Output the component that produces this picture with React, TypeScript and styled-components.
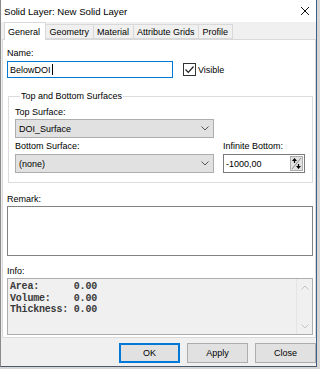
import React from 'react';
import styled, { createGlobalStyle } from 'styled-components';

const GlobalStyle = createGlobalStyle`
  html, body {
    margin: 0;
    padding: 0;
  }
  body {
    width: 320px;
    height: 369px;
    overflow: hidden;
    background: #d6d6d6;
    font-family: 'Liberation Sans', Arial, sans-serif;
  }
`;

const Window = styled.div`
  width: 315px;
  height: 366px;
  background: #f0f0f0;
  border-left: 1px solid #8a8a8a;
  border-right: 1px solid #3f5f86;
  border-bottom: 1px solid #4b5a6b;
  display: flex;
  flex-direction: column;
  color: #000;
  font-size: 9px;
`;

const TitleBar = styled.div`
  height: 22px;
  background: #fff;
  display: flex;
  align-items: center;
  justify-content: space-between;
  padding: 0 6px 0 3px;
  font-size: 9.6px;
`;

const TabStrip = styled.div`
  height: 17px;
  display: flex;
  align-items: flex-end;
  padding-left: 4px;
`;

const Tab = styled.div<{ active?: boolean }>`
  height: ${({ active }) => (active ? '18px' : '15px')};
  margin-bottom: ${({ active }) => (active ? '-1px' : '0')};
  padding: ${({ active }) => (active ? '0 5px 0 3px' : '0 3.5px')};
  display: flex;
  align-items: center;
  box-sizing: border-box;
  border: 1px solid #d9d9d9;
  border-bottom: ${({ active }) => (active ? 'none' : '1px solid #d9d9d9')};
  margin-left: -1px;
  background: ${({ active }) => (active ? '#fff' : '#f0f0f0')};
  position: relative;
  z-index: ${({ active }) => (active ? 1 : 0)};
`;

const TabPage = styled.div`
  height: 299px;
  margin-left: 1px;
  background: #fff;
  border: 1px solid #d9d9d9;
  box-sizing: border-box;
  padding: 7px 3px 0 4px;
  display: flex;
  flex-direction: column;
`;

const Label = styled.div<{ gap?: number; top?: number }>`
  height: 12px;
  line-height: 12px;
  margin-top: ${({ top }) => top ?? 0}px;
  margin-bottom: ${({ gap }) => gap ?? 2}px;
`;

const Row = styled.div`
  display: flex;
  align-items: center;
`;

const TextBox = styled.div<{ focused?: boolean; width: number }>`
  width: ${({ width }) => width}px;
  height: 17px;
  box-sizing: border-box;
  border: 1px solid ${({ focused }) => (focused ? '#0078d7' : '#7a7a7a')};
  background: #fff;
  display: flex;
  align-items: center;
  padding-left: 2px;
`;

const Caret = styled.span`
  display: inline-block;
  width: 1px;
  height: 11px;
  background: #000;
  margin-left: 1px;
`;

const CheckLabel = styled.label`
  display: flex;
  align-items: center;
  margin-left: 10px;
  gap: 2px;
`;

const CheckBox = styled.span`
  width: 13px;
  height: 13px;
  box-sizing: border-box;
  border: 1px solid #333;
  background: #fff;
  display: flex;
  align-items: center;
  justify-content: center;
`;

const Group = styled.fieldset`
  margin: 12px 0 0 1px;
  width: 305px;
  box-sizing: border-box;
  border: 1px solid #dcdcdc;
  padding: 4px 6px 9px 6px;
  display: flex;
  flex-direction: column;
`;

const Legend = styled.legend`
  padding: 0 1px;
  margin-left: 5px;
  line-height: 12px;
`;

const Select = styled.div<{ width: number }>`
  width: ${({ width }) => width}px;
  height: 19px;
  box-sizing: border-box;
  border: 1px solid #adadad;
  background: #e1e1e1;
  display: flex;
  align-items: center;
  justify-content: space-between;
  padding: 0 4px 0 3px;
  color: #000;
`;

const ChevronSlot = styled.span<{ faded?: boolean }>`
  display: flex;
  color: ${({ faded }) => (faded ? '#c3c3c3' : '#555')};
`;

const Columns = styled.div`
  display: flex;
  gap: 9px;
  margin-top: 2px;
`;

const Column = styled.div`
  display: flex;
  flex-direction: column;
`;

const NumberBox = styled(TextBox)`
  height: 19px;
  justify-content: space-between;
  padding-right: 1px;
`;

const SpinButton = styled.span`
  width: 13px;
  height: 15px;
  box-sizing: border-box;
  border: 1px solid #adadad;
  background: #e1e1e1;
  display: flex;
`;

const Area = styled.div<{ height: number; disabled?: boolean }>`
  width: 306px;
  height: ${({ height }) => height}px;
  box-sizing: border-box;
  border: 1px solid ${({ disabled }) => (disabled ? '#adadad' : '#828282')};
  background: ${({ disabled }) => (disabled ? '#f0f0f0' : '#fff')};
  display: flex;
`;

const InfoText = styled.pre`
  flex: 1;
  margin: 0;
  padding: 2px 0 0 2px;
  font-family: 'Liberation Mono', 'Courier New', monospace;
  font-weight: bold;
  font-size: 10px;
  letter-spacing: -0.2px;
  line-height: 11.7px;
  color: #3a3a3a;
`;

const ScrollBar = styled.div`
  width: 15px;
  border-left: 1px solid #e4e4e4;
  display: flex;
  flex-direction: column;
  justify-content: space-between;
  align-items: center;
  padding: 6px 0 5px;
`;

const ButtonRow = styled.div`
  display: flex;
  justify-content: flex-end;
  gap: 7px;
  padding-top: 5px;
`;

const Button = styled.button<{ primary?: boolean }>`
  width: 61px;
  height: 20px;
  box-sizing: border-box;
  border: ${({ primary }) => (primary ? '2px solid #0078d7' : '1px solid #adadad')};
  background: #e1e1e1;
  font-family: inherit;
  font-size: 9px;
  color: #000;
  padding: 0;
`;

const Chevron = ({ up }: { up?: boolean }) => (
  <svg width="8" height="5" viewBox="0 0 8 5">
    <path
      d={up ? 'M0.5 4.5 L4 1 L7.5 4.5' : 'M0.5 0.5 L4 4 L7.5 0.5'}
      fill="none"
      stroke="currentColor"
      strokeWidth="1"
    />
  </svg>
);

const App = () => (
  <>
    <GlobalStyle />
    <Window>
      <TitleBar>
        <span>Solid Layer: New Solid Layer</span>
        <svg width="10" height="10" viewBox="0 0 10 10">
          <path d="M1 1 L9 9 M9 1 L1 9" stroke="#111" strokeWidth="1" />
        </svg>
      </TitleBar>
      <TabStrip>
        <Tab active>General</Tab>
        <Tab>Geometry</Tab>
        <Tab>Material</Tab>
        <Tab>Attribute Grids</Tab>
        <Tab>Profile</Tab>
      </TabStrip>
      <TabPage>
        <Label>Name:</Label>
        <Row>
          <TextBox focused width={166}>
            BelowDOI
            <Caret />
          </TextBox>
          <CheckLabel>
            <CheckBox>
              <svg width="11" height="11" viewBox="0 0 11 11">
                <path d="M1.5 5.5 L4.3 8.3 L9.5 2.5" fill="none" stroke="#222" strokeWidth="1.2" />
              </svg>
            </CheckBox>
            Visible
          </CheckLabel>
        </Row>
        <Group>
          <Legend>Top and Bottom Surfaces</Legend>
          <Label gap={1}>Top Surface:</Label>
          <Select width={199}>
            DOI_Surface
            <ChevronSlot>
              <Chevron />
            </ChevronSlot>
          </Select>
          <Columns>
            <Column>
              <Label>Bottom Surface:</Label>
              <Select width={199}>
                (none)
                <ChevronSlot>
                  <Chevron />
                </ChevronSlot>
              </Select>
            </Column>
            <Column>
              <Label>Infinite Bottom:</Label>
              <NumberBox width={82}>
                -1000,00
                <SpinButton>
                  <svg width="11" height="13" viewBox="0 0 11 13">
                    <path d="M1 12 L10 1" stroke="#777" strokeWidth="0.8" />
                    <path d="M3.5 1 L1 4 L6 4 Z M7.5 12 L5 9 L10 9 Z" fill="#000" />
                    <path d="M3.5 3 L3.5 6 M7.5 7 L7.5 10" stroke="#000" strokeWidth="1.2" />
                  </svg>
                </SpinButton>
              </NumberBox>
            </Column>
          </Columns>
        </Group>
        <Label top={10} gap={1}>Remark:</Label>
        <Area height={50} />
        <Label top={9} gap={1}>Info:</Label>
        <Area height={57} disabled>
          <InfoText>{'Area:      0.00\nVolume:    0.00\nThickness: 0.00'}</InfoText>
          <ScrollBar>
            <ChevronSlot faded>
              <Chevron up />
            </ChevronSlot>
            <ChevronSlot faded>
              <Chevron />
            </ChevronSlot>
          </ScrollBar>
        </Area>
      </TabPage>
      <ButtonRow>
        <Button primary>OK</Button>
        <Button>Apply</Button>
        <Button>Close</Button>
      </ButtonRow>
    </Window>
  </>
);

export default App;
